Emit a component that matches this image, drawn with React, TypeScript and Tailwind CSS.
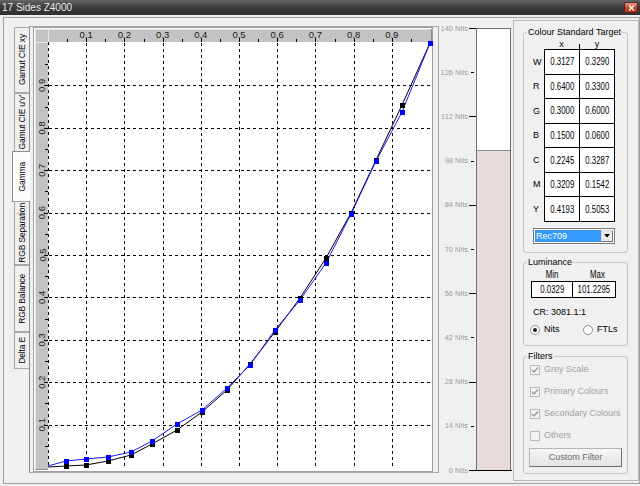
import React from "react";

const X = (v: number) => 48 + v * 382;
const Y = (v: number) => 467 - v * 424;

const bluePts: [number, number][] = [
  [48, 466], [66, 461], [86, 459], [108, 457], [131, 452], [152, 441], [177, 424], [202, 410],
  [227, 388], [250, 365], [275, 330], [300, 300], [326, 263], [351, 214], [376, 161], [402, 112], [430, 43],
];
const blackPts: [number, number][] = [
  [48, 467], [66, 466], [86, 465], [108, 461], [131, 455], [152, 444], [177, 430], [202, 412],
  [227, 390], [250, 364], [275, 332], [300, 298], [326, 258], [351, 213], [376, 160], [402, 105], [430, 43],
];

const tabs = [
  { label: "Gamut CIE xy", h: 66 },
  { label: "Gamut CIE u'v'", h: 59 },
  { label: "Gamma", h: 51, active: true },
  { label: "RGB Separation", h: 64 },
  { label: "RGB Balance", h: 67 },
  { label: "Delta E", h: 37 },
];

const targets = [
  ["W", "0.3127", "0.3290"],
  ["R", "0.6400", "0.3300"],
  ["G", "0.3000", "0.6000"],
  ["B", "0.1500", "0.0600"],
  ["C", "0.2245", "0.3287"],
  ["M", "0.3209", "0.1542"],
  ["Y", "0.4193", "0.5053"],
];

const filters = [
  { label: "Grey Scale", checked: true },
  { label: "Primary Colours", checked: true },
  { label: "Secondary Colours", checked: true },
  { label: "Others", checked: false },
];

function Chart() {
  const grid = [1, 2, 3, 4, 5, 6, 7, 8, 9];
  const ticks = Array.from({ length: 19 }, (_, i) => i + 1);
  const line = (pts: [number, number][]) => pts.map((p) => p.join(",")).join(" ");
  return (
    <svg width={408} height={445} viewBox="30 27 408 445" className="block">
      <g shapeRendering="crispEdges">
        <rect x={30} y={27} width={408} height={445} fill="#f0f0f0" />
        <rect x={33.5} y={27.5} width={399} height={444} fill="#ffffff" stroke="#a0a0a0" />
        {/* rulers */}
        <rect x={35} y={29} width={396} height={13} fill="#c3c3c3" />
        <rect x={35} y={29} width={13} height={440} fill="#c3c3c3" />
        <line x1={35} y1={29.5} x2={431} y2={29.5} stroke="#e2e2e2" />
        <line x1={35.5} y1={29} x2={35.5} y2={469} stroke="#e2e2e2" />
        <line x1={48.5} y1={29} x2={48.5} y2={42} stroke="#e8e8e8" />
        <line x1={35} y1={42.5} x2={48} y2={42.5} stroke="#e8e8e8" />
        <line x1={431.5} y1={29} x2={431.5} y2={42} stroke="#8a8a8a" />
        <line x1={35} y1={469.5} x2={48} y2={469.5} stroke="#8a8a8a" />
        {ticks.map((i) => {
          const major = i % 2 === 0;
          const x = Math.round(X(i * 0.05)) + 0.5;
          const y = Math.round(Y(i * 0.05)) + 0.5;
          return (
            <g key={i} stroke="#000">
              <line x1={x} y1={major ? 38 : 39} x2={x} y2={42} />
              <line x1={major ? 44 : 45} y1={y} x2={48} y2={y} />
            </g>
          );
        })}
        {/* grid */}
        <line x1={48.5} y1={42} x2={48.5} y2={467} stroke="#000" strokeDasharray="3 3" />
        {grid.map((i) => {
          const x = Math.round(X(i / 10)) + 0.5;
          const y = Math.round(Y(i / 10)) + 0.5;
          return (
            <g key={i} stroke="#000" strokeDasharray="3 3">
              <line x1={x} y1={43} x2={x} y2={467} />
              <line x1={49} y1={y} x2={431} y2={y} />
            </g>
          );
        })}
      </g>
      <g fontFamily="'Liberation Sans', Arial, sans-serif" fontSize={9.5} fill="#1a1a1a">
        {grid.map((i) => (
          <text key={"t" + i} x={X(i / 10)} y={38} textAnchor="middle">
            {`0.${i}`}
          </text>
        ))}
        {grid.map((i) => {
          const y = Y(i / 10);
          return (
            <text key={"v" + i} x={45.5} y={y} textAnchor="middle" transform={`rotate(-90 45.5 ${y})`}>
              {`0.${i}`}
            </text>
          );
        })}
      </g>
      <polyline points={line(blackPts)} fill="none" stroke="#000" strokeWidth={1} />
      <polyline points={line(bluePts)} fill="none" stroke="#1a1aff" strokeWidth={1} />
      <g shapeRendering="crispEdges">
        {blackPts.slice(1).map(([x, y], i) => (
          <rect key={"b" + i} x={x - 2.5} y={y - 2.5} width={5} height={5} fill="#000" />
        ))}
        {bluePts.slice(1).map(([x, y], i) => (
          <rect key={"u" + i} x={x - 2.5} y={y - 2.5} width={5} height={5} fill="#0000ff" />
        ))}
      </g>
    </svg>
  );
}

function NitsBar() {
  const levels = [0, 14, 28, 42, 56, 70, 84, 98, 112, 126, 140];
  const Yn = (n: number) => 470 - (n / 140) * 442;
  const top = Math.round(Yn(101.2295));
  return (
    <svg width={74} height={465} viewBox="438 18 74 465" className="block">
      <g fontFamily="'Liberation Sans', Arial, sans-serif" fontSize={7.5} fill="#9d9d9d">
        {levels.map((n) => (
          <text key={n} x={467} y={Yn(n) + 2.5} textAnchor="end">
            {`${n} Nits`}
          </text>
        ))}
      </g>
      <g shapeRendering="crispEdges">
        {levels.map((n, i) => {
          const y = Math.round(Yn(n)) + 0.5;
          return i % 2 === 0 ? (
            <line key={n} x1={468} y1={y} x2={475} y2={y} stroke="#000" />
          ) : (
            <line key={n} x1={470} y1={y} x2={473} y2={y} stroke="#000" />
          );
        })}
        <rect x={475.5} y={28.5} width={34} height={441} fill="#ffffff" stroke="#6f6f6f" />
        <rect x={476} y={top} width={33} height={470 - top} fill="#e8dbdb" />
        <line x1={476} y1={top + 0.5} x2={509} y2={top + 0.5} stroke="#8d8d8d" />
        <line x1={475} y1={470.5} x2={511} y2={470.5} stroke="#000" />
      </g>
    </svg>
  );
}

function CheckBox({ checked }: { checked: boolean }) {
  return (
    <div className="w-[10px] h-[10px] border border-[#b8b8b8] bg-[#f4f4f4] flex items-center justify-center">
      {checked && (
        <svg width="8" height="8" viewBox="0 0 8 8">
          <path d="M1 4 L3 6 L7 1.5" fill="none" stroke="#9a9a9a" strokeWidth="1.4" />
        </svg>
      )}
    </div>
  );
}

function Radio({ on }: { on: boolean }) {
  return (
    <div className="w-[10px] h-[10px] rounded-full border border-[#8e8f8f] bg-white flex items-center justify-center">
      {on && <div className="w-[4px] h-[4px] rounded-full bg-[#1c1c1c]" />}
    </div>
  );
}

function Narrow({ children }: { children: React.ReactNode }) {
  return <span className="inline-block whitespace-nowrap text-[10px] scale-x-[0.78]">{children}</span>;
}

export default function App() {
  return (
    <div className="w-[640px] h-[486px] overflow-hidden bg-[#f0f0f0] flex flex-col font-['Liberation_Sans',Arial,sans-serif] text-[9px] text-black select-none">
      {/* title bar */}
      <div className="h-[15px] shrink-0 flex items-start justify-between bg-[linear-gradient(#656565,#3d3d3d_45%,#2f2f2f)] pl-[2px] pr-[2px]">
        <span className="text-[10px] leading-[15px] text-[#ebebeb]">17 Sides Z4000</span>
        <div className="mt-[2px] w-[14px] h-[11px] rounded-[2px] border border-[#5a2418] bg-[linear-gradient(#e99c8b,#c8462f_50%,#b5351a)] flex items-center justify-center">
          <svg width="7" height="6" viewBox="0 0 7 6">
            <path d="M1 0.5 L6 5.5 M6 0.5 L1 5.5" stroke="#ffffff" strokeWidth="1.4" />
          </svg>
        </div>
      </div>

      <div className="flex-1 flex pl-[3px] pt-[2px] pb-[2px]">
        <div className="flex-1 flex border border-[#a0a0a0]">
          {/* left: tabs, chart, nits */}
          <div className="w-[509px] flex items-start">
            <div className="flex items-start pl-[8px] pt-[8px]">
              <div className="w-[18px] flex flex-col pt-[1px] relative z-10">
                {tabs.map((t) => (
                  <div
                    key={t.label}
                    style={{ height: t.h }}
                    className={
                      t.active
                        ? "w-[18px] -my-[1px] border-l border-t border-b border-[#8c8c8c] bg-[#fbfbfb] flex items-center justify-center"
                        : "ml-[2px] w-[15px] border-l border-t border-b border-[#a7a7a7] bg-[#f0f0f0] flex items-center justify-center"
                    }
                  >
                    <span className="[writing-mode:vertical-rl] rotate-180 whitespace-nowrap leading-[12px] text-[8.5px] tracking-[-0.15px]">
                      {t.label}
                    </span>
                  </div>
                ))}
              </div>
              <div className="-ml-[1px] w-[410px] h-[447px] border border-[#a7a7a7] border-l-[#8c8c8c] bg-[#f0f0f0]">
                <Chart />
              </div>
            </div>
            <NitsBar />
          </div>

          {/* right panel */}
          <div className="mt-[2px] w-[126px] h-[461px] border border-[#b9b9b9] flex flex-col">
            <fieldset className="ml-[9px] mt-[5px] w-[105px] h-[227px] border border-[#c6c6c6] rounded-[3px]">
              <legend className="ml-[3px] px-[1px] leading-[13px]">Colour Standard Target</legend>
              <div className="flex pl-[20px] h-[10px] items-end">
                <span className="w-[35px] text-center leading-[10px] self-start">x</span>
                <div className="w-px h-[5px] bg-[#000]" />
                <span className="w-[34px] text-center leading-[10px] self-start">y</span>
              </div>
              <div className="flex">
                <div className="w-[20px] flex flex-col pt-[1px]">
                  {targets.map((r) => (
                    <div key={r[0]} className="h-[24.57px] flex items-center pl-[9px]">
                      {r[0]}
                    </div>
                  ))}
                </div>
                <div className="w-[71px] border-l border-t border-black grid grid-cols-2">
                  {targets.map((r) => (
                    <React.Fragment key={r[0]}>
                      <div className="h-[24.57px] border-r border-b border-black bg-white flex items-center justify-center">
                        <Narrow>{r[1]}</Narrow>
                      </div>
                      <div className="h-[24.57px] border-r border-b border-black bg-white flex items-center justify-center">
                        <Narrow>{r[2]}</Narrow>
                      </div>
                    </React.Fragment>
                  ))}
                </div>
              </div>
              <div className="ml-[9px] mt-[6px] w-[82px] h-[16px] border border-[#7a7a7a] bg-white flex p-[1px]">
                <span className="flex-1 bg-[#3399ff] text-white leading-[12px] pl-[1px]">Rec709</span>
                <div className="w-[12px] bg-[#ececec] border border-[#d8d8d8] border-r-[#707070] border-b-[#707070] flex items-center justify-center">
                  <svg width="6" height="4" viewBox="0 0 6 4">
                    <path d="M0 0 H6 L3 3.5 Z" fill="#000" />
                  </svg>
                </div>
              </div>
            </fieldset>

            <fieldset className="ml-[9px] mt-[3px] w-[105px] h-[90px] border border-[#c6c6c6] rounded-[3px]">
              <legend className="ml-[3px] px-[1px] leading-[13px]">Luminance</legend>
              <div className="flex ml-[7px] h-[12px] items-center">
                <span className="w-[42px] text-center"><Narrow>Min</Narrow></span>
                <span className="w-[42px] text-center pl-[6px]"><Narrow>Max</Narrow></span>
              </div>
              <div className="ml-[7px] w-[85px] h-[17px] border border-black bg-white flex">
                <div className="w-[42px] border-r border-black flex items-center justify-center">
                  <Narrow>0.0329</Narrow>
                </div>
                <div className="flex-1 flex items-center justify-center">
                  <Narrow>101.2295</Narrow>
                </div>
              </div>
              <div className="ml-[9px] mt-[8px] h-[13px] leading-[13px]">CR: 3081.1:1</div>
              <div className="mt-[5px] h-[12px] flex items-center pl-[6px]">
                <Radio on />
                <span className="ml-[4px] w-[39px]">Nits</span>
                <Radio on={false} />
                <span className="ml-[4px]">FTLs</span>
              </div>
            </fieldset>

            <fieldset className="ml-[9px] mt-[4px] w-[105px] h-[124px] border border-[#c6c6c6] rounded-[3px]">
              <legend className="ml-[3px] px-[1px] leading-[13px]">Filters</legend>
              <div className="flex flex-col gap-[9px] pl-[6px]">
                {filters.map((f) => (
                  <div key={f.label} className="h-[13px] flex items-center text-[#a2a2a2]">
                    <CheckBox checked={f.checked} />
                    <span className="ml-[4px]">{f.label}</span>
                  </div>
                ))}
              </div>
              <button className="ml-[5px] mt-[6px] w-[93px] h-[19px] border border-[#b5b5b5] border-r-[#6e6e6e] border-b-[#6e6e6e] bg-[linear-gradient(#f6f6f6,#e4e4e4)] text-[#6b6b6b] text-[9px] flex items-center justify-center">
                Custom Filter
              </button>
            </fieldset>
          </div>
        </div>
      </div>
    </div>
  );
}
